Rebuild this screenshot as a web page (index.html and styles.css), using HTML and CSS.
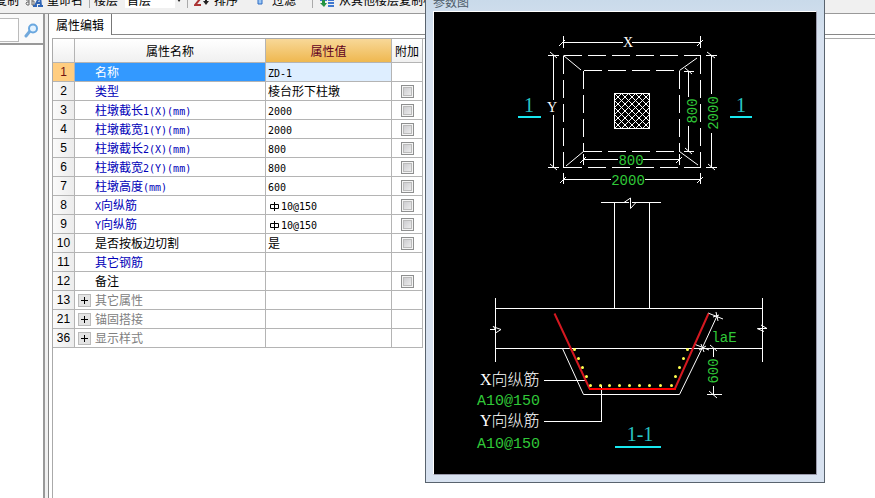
FILE: index.html
```html
<!DOCTYPE html>
<html lang="zh-CN">
<head>
<meta charset="utf-8">
<title>属性编辑</title>
<link rel="stylesheet" href="styles.css">
</head>
<body>
<div class="app">
  <header class="toolbar">
    <button class="tool tool-copy">复制</button>
    <button class="tool tool-rename">
      <svg width="18" height="14" viewBox="0 0 18 14" aria-hidden="true"><path d="M1 6h3v5H2Q0 9 2 8h2M7 1v10M7 7h2v4H7" fill="none" stroke="#666"/><path d="M10 12L15 2L16 12M12 9h4M8 12h4M13 12h5" fill="none" stroke="#2f64b5" stroke-width="2"/></svg>
      重命名</button>
    <label class="tool tool-floor" for="floor">楼层</label>
    <select id="floor" class="floor"><option>首层</option></select>
    <span class="caret"></span>
    <button class="tool tool-sort">
      <svg width="16" height="14" viewBox="0 0 16 14" aria-hidden="true"><path d="M1 5h5L1 11h6" fill="none" stroke="#a33" stroke-width="2"/><path d="M12 0v9" stroke="#222" stroke-width="2"/><path d="M9 7h6l-3 4z" fill="#222"/></svg>
      排序<span class="caret"></span></button>
    <button class="tool tool-filter">
      <svg width="8" height="14" viewBox="0 0 8 14" aria-hidden="true"><path d="M2 0h4v10H2z" fill="#9cc7f5" stroke="#2e6cc4"/></svg>
      过滤<span class="caret"></span></button>
    <button class="tool tool-import">
      <svg width="16" height="14" viewBox="0 0 16 14" aria-hidden="true"><path d="M1 6h7M9 3h6M9 6h6M9 9h6M9 12h6" stroke="#3f78cf" stroke-width="2"/><path d="M3 6h3v3h2l-3 4l-4-4h2z" fill="#249441"/></svg>
      从其他楼层复制构</button>
  </header>
  <div class="workspace">
    <aside class="sidebar">
      <form class="search">
        <input type="text" aria-label="搜索构件">
        <button type="button" aria-label="搜索"><svg width="15" height="15" viewBox="0 0 15 15"><path d="M2 13l4-5" stroke="#72a9dc" stroke-width="3" stroke-linecap="round"/><circle cx="9" cy="5.500" r="4" fill="#e2f2ff" stroke="#69a7df" stroke-width="2"/></svg></button>
      </form>
    </aside>
    <main class="pane">
      <div class="tabs"><button class="tab">属性编辑</button><span class="tab-rest"></span></div>
      <div class="sheet">
        <table class="props">
          <colgroup><col class="c-num"><col class="c-name"><col class="c-value"><col class="c-add"></colgroup>
          <thead><tr><th></th><th>属性名称</th><th class="hot">属性值</th><th>附加</th></tr></thead>
          <tbody>
            <tr class="selected"><th>1</th><td class="name">名称</td><td><span class="lat">ZD-1</span></td><td></td></tr>
            <tr><th>2</th><td class="name">类型</td><td>棱台形下柱墩</td><td class="add"><input type="checkbox" aria-label="类型附加"></td></tr>
            <tr><th>3</th><td class="name">柱墩截长<span class="lat">1(X)(mm)</span></td><td><span class="lat">2000</span></td><td class="add"><input type="checkbox" aria-label="截长1附加"></td></tr>
            <tr><th>4</th><td class="name">柱墩截宽<span class="lat">1(Y)(mm)</span></td><td><span class="lat">2000</span></td><td class="add"><input type="checkbox" aria-label="截宽1附加"></td></tr>
            <tr><th>5</th><td class="name">柱墩截长<span class="lat">2(X)(mm)</span></td><td><span class="lat">800</span></td><td class="add"><input type="checkbox" aria-label="截长2附加"></td></tr>
            <tr><th>6</th><td class="name">柱墩截宽<span class="lat">2(Y)(mm)</span></td><td><span class="lat">800</span></td><td class="add"><input type="checkbox" aria-label="截宽2附加"></td></tr>
            <tr><th>7</th><td class="name">柱墩高度<span class="lat">(mm)</span></td><td><span class="lat">600</span></td><td class="add"><input type="checkbox" aria-label="高度附加"></td></tr>
            <tr><th>8</th><td class="name"><span class="lat">X</span>向纵筋</td><td class="rebar"><svg width="9" height="9" viewBox="0 0 9 9" role="img" aria-label="Φ"><path d="M.500 2.500h8v4h-8zM4.500 0v9" fill="none" stroke="#000"/></svg><span class="lat">10@150</span></td><td class="add"><input type="checkbox" aria-label="X向纵筋附加"></td></tr>
            <tr><th>9</th><td class="name"><span class="lat">Y</span>向纵筋</td><td class="rebar"><svg width="9" height="9" viewBox="0 0 9 9" role="img" aria-label="Φ"><path d="M.500 2.500h8v4h-8zM4.500 0v9" fill="none" stroke="#000"/></svg><span class="lat">10@150</span></td><td class="add"><input type="checkbox" aria-label="Y向纵筋附加"></td></tr>
            <tr><th>10</th><td class="name plain">是否按板边切割</td><td>是</td><td class="add"><input type="checkbox" aria-label="切割附加"></td></tr>
            <tr><th>11</th><td class="name">其它钢筋</td><td></td><td></td></tr>
            <tr><th>12</th><td class="name plain">备注</td><td></td><td class="add"><input type="checkbox" aria-label="备注附加"></td></tr>
            <tr><th>13</th><td class="group"><div><button class="expand" aria-label="展开其它属性"></button>其它属性</div></td><td></td><td></td></tr>
            <tr><th>21</th><td class="group"><div><button class="expand" aria-label="展开锚固搭接"></button>锚固搭接</div></td><td></td><td></td></tr>
            <tr><th>36</th><td class="group"><div><button class="expand" aria-label="展开显示样式"></button>显示样式</div></td><td></td><td></td></tr>
          </tbody>
        </table>
      </div>
    </main>
  </div>
  <section class="dialog" aria-label="参数图">
    <h2>参数图</h2>
    <svg class="drawing" viewBox="434 12 382 462" width="382" height="462">
      <defs>
        <pattern id="hatch" x="614" y="93" width="7" height="7" patternUnits="userSpaceOnUse"><path d="M0 0h1v1H0zM1 1h1v1H1zM2 2h1v1H2zM3 3h1v1H3zM4 4h1v1H4zM5 5h1v1H5zM6 6h1v1H6zM6 1h1v1H6zM5 2h1v1H5zM4 3h1v1H4zM3 4h1v1H3zM2 5h1v1H2zM1 6h1v1H1z" fill="#fff" shape-rendering="crispEdges"/></pattern>
      </defs>
      <g class="line crisp">
        <path d="M563.500 42.500H623M632 42.500H700.500M563.500 36V48M700.500 36V48"/>
        <path d="M553.500 55.500V100M553.500 115V167.500M548 55.500H559M548 167.500H559"/>
        <path d="M688.500 71.500V97M688.500 126V151.500M684 71.500H694M684 151.500H694"/>
        <path d="M711.500 55.500V94M711.500 133V167.500M706 55.500H717M706 167.500H717"/>
        <path d="M583.500 159.500H618M643 159.500H679.500M583.500 154V165M679.500 154V165"/>
        <path d="M563.500 179.500H611M645 179.500H700.500M563.500 173V184M700.500 173V184"/>
        <path class="dash" d="M563.500 55.500H700.500M563.500 55.500V167.500M700.500 55.500V167.500M563.500 167.500H700.500"/>
        <path class="dash" d="M583.500 70.500H679.500M583.500 70.500V151.500M679.500 70.500V151.500M583.500 151.500H679.500"/>
        <path d="M601 202.500H629M632 202.500H661M614.500 202.500V308.500M649.500 202.500V308.500"/>
        <path d="M495.500 308.500H762.500M495.500 348.500H762.500M495.500 298V362M762.500 298V362"/>
        <path d="M544 380.500H585M544 421.500H601.500V385M707 394.500H722M713.500 348.500V357M713.500 386V394.500"/>
      </g>
      <rect x="614.500" y="93.500" width="35" height="35" fill="url(#hatch)" stroke="#fff"/>
      <g class="line">
        <path d="M559 46L565 40M697 46L703 40M550 52L557 58M550 164L557 170M685 68L692 74M685 148L692 154M707 52L715 58M708 164L715 170M580 163L586 157M676 163L682 157M560 183L566 177M697 183L703 177"/>
        <path d="M563.500 55.500L581 70M679.500 70.500L697 58M566 166L583.500 151.500M679.500 151.500L698 165"/>
        <path d="M624 202.500L630.500 198V208.500L636 202.500"/>
        <path d="M490 329.500H495.500L493 326M495.500 333L501 329.500L494 327M757 328.500L764 331.500M761 325L767 328.500H758"/>
        <path d="M562.500 348.500L583.500 394.500H679.500L702 348.500L717 316"/>
        <path d="M708 313L723 319M694 344L709 350M713 317L719 315M716 312L718 321M699 350L706 346M701 344L704 352M710 345L717 351M709 391L717 398"/>
      </g>
      <path class="bar" d="M554.500 313.500L589.500 388.500M675 388.500L708.500 313.500"/>
      <path class="bar bar-base" d="M589 389H676"/>
      <path class="dots" d="M574.500 349.500h0M578.500 358.500h0M582.500 367.500h0M586.500 376.500h0M590.500 385.500h0M600.500 385.500h0M609.500 385.500h0M619.500 385.500h0M629.500 385.500h0M639.500 385.500h0M649.500 385.500h0M660.500 385.500h0M671.500 385.500h0M675.500 376.500h0M679.500 367.500h0M683.500 358.500h0M687.500 349.500h0"/>
      <g class="axis"><text x="628" y="47">X</text><text x="552" y="112">Y</text></g>
      <g class="dim">
        <text x="631" y="165">800</text><text x="628" y="185">2000</text>
        <text transform="translate(697 111) rotate(-90)">800</text>
        <text transform="translate(718 113) rotate(-90)">2000</text>
        <text transform="translate(718 371) rotate(-90)">600</text>
        <text x="724" y="342">laE</text>
      </g>
      <g class="note">
        <text x="480" y="385">X向纵筋</text><text x="480" y="426">Y向纵筋</text>
        <text class="spec" x="477" y="405">A10@150</text><text class="spec" x="477" y="448">A10@150</text>
      </g>
      <g class="mark"><text x="529" y="112">1</text><text x="741" y="112">1</text><text x="640" y="441">1-1</text></g>
      <path class="underline" d="M518 117H541M730 117H752M615 447H661"/>
    </svg>
  </section>
</div>
</body>
</html>
```
FILE: styles.css
```css
* { box-sizing: border-box; }
body {
  margin: 0;
  background: #fff;
  color: #000;
  font: 12px/16px "Noto Sans CJK SC", sans-serif;
}
button, input, select { font: inherit; color: inherit; margin: 0; padding: 0; border: 0; background: none; }
.app { position: relative; min-height: 100vh; display: flex; flex-direction: column; overflow: hidden; }

.toolbar {
  display: flex;
  align-items: flex-end;
  height: 14px;
  padding-bottom: 5px;
  overflow: hidden;
  background: #f0f0f0;
  border-bottom: 1px solid #999;
  white-space: nowrap;
}
.tool { display: flex; align-items: center; gap: 4px; flex: none; height: 16px; }
.tool svg { margin-top: 2px; }
.tool-copy { margin-left: -5px; }
.tool-rename { margin-left: 6px; }
.tool-floor { margin-left: 6px; padding-left: 4px; border-left: 1px solid #aaa; }
.floor { appearance: none; flex: none; width: 50px; height: 16px; margin-left: 7px; padding-left: 2px; background: #fff; }
.caret { flex: none; width: 4px; height: 3px; margin: 0 2px 6px; background: #222; clip-path: polygon(0 0, 100% 0, 50% 100%); }
.tool-sort { margin-left: 4px; padding-left: 6px; border-left: 1px solid #aaa; }
.tool-filter { margin-left: 10px; gap: 8px; }
.tool-sort .caret, .tool-filter .caret { margin: 0 0 4px; }
.tool-import { margin-left: 4px; padding-left: 6px; border-left: 1px solid #aaa; }

.workspace { display: flex; flex: 1; background: #f0f0f0; }
.sidebar { flex: none; width: 45px; margin-right: 3px; background: #fff; border-right: 2px solid #999; }
.search { display: flex; align-items: center; height: 31px; padding-top: 3px; border-bottom: 2px solid #999; background: #fafafa; }
.search input { width: 19px; height: 24px; border: 1px solid #bbb; border-left: 0; background: #fff; }
.search button { display: flex; margin-left: 5px; }

.pane { flex: 1; min-width: 0; display: flex; flex-direction: column; background: #fff; border-left: 1px solid #888; }
.tabs { display: flex; height: 21px; }
.tab { flex: none; width: 63px; border-right: 1px solid #777; text-align: center; }
.tab-rest { flex: 1; border-bottom: 1px solid #888; }
.sheet { flex: 1; margin: 3px 0 0 3px; border: solid #aaa; border-width: 1px 0 0 1px; }

.props { table-layout: fixed; width: 370px; border-collapse: separate; border-spacing: 0; }
.c-num { width: 22px; }
.c-name { width: 191px; }
.c-value { width: 126px; }
.c-add { width: 31px; }
.props th, .props td {
  height: 19px;
  padding: 0 0 0 2px;
  border: solid #b4b4b4;
  border-width: 0 1px 1px 0;
  line-height: 18px;
  text-align: left;
  font-weight: normal;
  white-space: nowrap;
}
.props thead th { height: 24px; padding: 0; text-align: center; background: linear-gradient(#fff, #f0f0f0); }
.props thead .hot { background: linear-gradient(#f8d898, #efb850); color: #600020; }
.props tbody th { padding: 0; text-align: center; font-family: "Liberation Sans", sans-serif; background: linear-gradient(90deg, #fafafa, #ececec); }
.props .name { padding-left: 20px; color: #0000b8; }
.props .plain { color: #000; }
.props .selected th { background: #ffcd80; color: #701010; }
.props .selected .name { background: #39f; color: #fff; }
.props .selected .name + td { background: #deeeff; }
.props .rebar { padding-left: 4px; }
.rebar svg { margin-right: 2px; vertical-align: middle; }
.lat { font-family: "DejaVu Sans Mono", monospace; font-size: 10px; line-height: 10px; }
.props .add { padding: 0; text-align: center; }
.add input {
  appearance: none;
  display: block;
  width: 13px;
  height: 13px;
  margin: 0 auto;
  border: 1px solid #8e8f8f;
  background: linear-gradient(135deg, #c4c4c8, #f4f4f4);
  box-shadow: inset 0 0 0 1px #f4f4f4, inset 0 0 0 2px #bbb;
}
.props .group { padding-left: 3px; color: #808080; }
.group div { display: flex; align-items: center; gap: 4px; }
.expand {
  width: 13px;
  height: 13px;
  border: 1px solid #bbb;
  background:
    linear-gradient(#000, #000) center / 7px 1px no-repeat,
    linear-gradient(#000, #000) center / 1px 7px no-repeat,
    #e4e4e4;
}

.dialog {
  position: absolute;
  top: 0;
  left: 425px;
  padding: 0 7px 7px;
  border: 1px solid #59636e;
  border-top: 0;
  background: linear-gradient(#c9daea, #d8e2f0 40px);
}
.dialog h2 { height: 11px; margin: 0; overflow: hidden; font-size: 12px; font-weight: normal; line-height: 4px; color: #4c5a68; }
.drawing { display: block; box-sizing: content-box; border: 1px solid #fff; border-color: #fff #99a #99a #fff; background: #000; }
.line { fill: none; stroke: #fff; stroke-width: 1; }
.crisp { shape-rendering: crispEdges; }
.dash { stroke-dasharray: 18 6; }
.bar { fill: none; stroke: #d41820; stroke-width: 2; }
.bar-base { stroke: #f00; }
.dots { stroke: #ffff50; stroke-width: 3; stroke-linecap: round; }
.underline { stroke: #18e8f0; stroke-width: 2; }
.axis { fill: #fff; font: 14px "Liberation Serif", serif; text-anchor: middle; }
.dim { fill: #30c838; font: 14px "Liberation Mono", monospace; text-anchor: middle; }
.note { fill: #fff; font: 16px "Liberation Serif", "Noto Sans CJK SC", serif; font-weight: 300; }
.spec { fill: #30c838; font: 15px "Liberation Mono", monospace; }
.mark { fill: #28c4c4; font: 20px "Liberation Serif", serif; text-anchor: middle; }
```
